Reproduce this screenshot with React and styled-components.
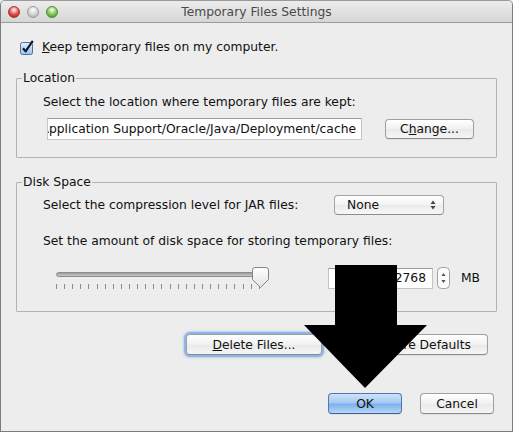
import React from 'react'
import styled, {createGlobalStyle} from 'styled-components'

const Global = createGlobalStyle`
  html, body {
    margin: 0;
    padding: 0;
    background: #ededed;
  }
  body {
    font-family: "DejaVu Sans", "Liberation Sans", sans-serif;
    font-size: 12.3px;
    color: #111;
  }
`

const Window = styled.div`
  position: relative;
  width: 513px;
  height: 432px;
  box-sizing: border-box;
  border: 1px solid #7c7c7c;
  border-top-color: #9a9a9a;
  border-radius: 5px 5px 0 0;
  background: #ededed;
  display: flex;
  flex-direction: column;
  overflow: hidden;
`

const TitleBar = styled.div`
  position: relative;
  height: 21px;
  flex: none;
  display: flex;
  align-items: center;
  justify-content: center;
  background: linear-gradient(#ececec, #d6d6d6);
  border-bottom: 1px solid #9c9c9c;
  color: #4a4a4a;
`

const Lights = styled.div`
  position: absolute;
  left: 7px;
  top: 5px;
  display: flex;
  gap: 7px;
`

const Light = styled.span`
  width: 12px;
  height: 12px;
  border-radius: 50%;
  box-sizing: border-box;
  border: 1px solid ${p => p.$edge};
  background: radial-gradient(circle at 50% 30%, #fff 0, ${p => p.$color} 55%, ${p => p.$dark} 100%);
`

const CheckRow = styled.label`
  display: flex;
  align-items: center;
  height: 16px;
  margin: 16px 0 0 19px;
`

const CheckText = styled.span`
  margin-left: 8px;
`

const Group = styled.fieldset`
  margin: ${p => p.$top}px 15px 0 15px;
  padding: 0 0 ${p => p.$bottom}px 26px;
  border: 1px solid #b3b3b3;
  border-radius: 1px;
  min-width: 0;
`

const Legend = styled.legend`
  margin-left: -21px;
  padding: 0 1px;
  line-height: 14px;
  color: #111;
`

const Label = styled.div`
  line-height: 16px;
  margin-top: ${p => p.$top || 0}px;
  width: ${p => (p.$width ? p.$width + 'px' : 'auto')};
  flex: none;
`

const Row = styled.div`
  display: flex;
  align-items: center;
  margin-top: ${p => p.$top || 0}px;
  margin-left: ${p => p.$left || 0}px;
`

const PathField = styled.div`
  width: 315px;
  height: 22px;
  box-sizing: border-box;
  display: flex;
  justify-content: flex-end;
  align-items: center;
  overflow: hidden;
  white-space: nowrap;
  padding-right: 5px;
  background: #fff;
  border: 1px solid #c6c6c6;
  border-top-color: #9c9c9c;
`

const Button = styled.button`
  height: ${p => p.$h || 21}px;
  width: ${p => p.$w}px;
  margin-left: ${p => p.$gap || 0}px;
  box-sizing: border-box;
  padding: 0;
  font: inherit;
  color: #111;
  border-radius: 4px;
  border: 1px solid ${p => (p.$primary ? '#5476ae' : '#9f9f9f')};
  border-bottom-color: ${p => (p.$primary ? '#3e5f98' : '#8a8a8a')};
  background: ${p =>
    p.$primary
      ? 'linear-gradient(#cfe3fa 0%, #a5c9f1 45%, #7fb2ec 55%, #b5d6fa 100%)'
      : 'linear-gradient(#ffffff, #f1f1f1 50%, #e9e9e9 51%, #f6f6f6)'};
  box-shadow: ${p => (p.$focus ? '0 0 0 2px #8fb5e6, 0 0 2px 3px #bcd3f0' : '0 1px 1px rgba(0,0,0,0.06)')};
`

const Select = styled.div`
  width: 110px;
  height: 20px;
  box-sizing: border-box;
  display: flex;
  align-items: center;
  justify-content: space-between;
  padding: 0 7px 0 12px;
  border: 1px solid #a2a2a2;
  border-bottom-color: #8c8c8c;
  border-radius: 4px;
  background: linear-gradient(#ffffff, #f3f3f3 50%, #ebebeb 51%, #f7f7f7);
`

const Slider = styled.div`
  position: relative;
  width: 213px;
  height: 24px;
  margin-left: 13px;
  flex: none;
`

const Track = styled.div`
  position: absolute;
  left: 0;
  top: 6px;
  width: 206px;
  height: 5px;
  box-sizing: border-box;
  border-radius: 3px;
  border: 1px solid #8d8d8d;
  background: linear-gradient(#9b9b9b, #c9c9c9);
`

const Ticks = styled.div`
  position: absolute;
  left: 0;
  top: 18px;
  display: flex;
  gap: 7.12px;
`

const Tick = styled.span`
  width: 1px;
  height: 5px;
  background: #8a8a8a;
`

const Thumb = styled.svg`
  position: absolute;
  left: 196px;
  top: 1px;
`

const NumberField = styled.div`
  width: 105px;
  height: 21px;
  margin-left: 59px;
  box-sizing: border-box;
  display: flex;
  align-items: center;
  justify-content: flex-end;
  padding-right: 6px;
  background: #fff;
  border: 1px solid #c3c3c3;
  border-top-color: #9c9c9c;
`

const Stepper = styled.svg`
  margin-left: 4px;
  flex: none;
`

const Unit = styled.span`
  margin-left: 11px;
`

const ButtonRow = styled.div`
  display: flex;
  justify-content: flex-end;
  margin: ${p => p.$top}px ${p => p.$right}px 0 0;
`

const Overlay = styled.svg`
  position: absolute;
  left: -1px;
  top: -1px;
  pointer-events: none;
`

const Check = () => (
  <svg width="14" height="15" viewBox="0 0 14 15">
    <defs>
      <linearGradient id="cb" x1="0" y1="0" x2="0" y2="1">
        <stop offset="0" stopColor="#e3eefb" />
        <stop offset="1" stopColor="#9cc1ea" />
      </linearGradient>
    </defs>
    <rect x="0.5" y="2.5" width="12" height="12" rx="2" fill="url(#cb)" stroke="#4f6f9e" />
    <path d="M3 8.2 L5.6 11.4 L12.8 0.8" fill="none" stroke="#0c1a33" strokeWidth="2.2" strokeLinejoin="round" />
  </svg>
)

const ticks = Array.from({length: 26})

export default function App() {
  return (
    <>
      <Global />
      <Window>
        <TitleBar>
          <Lights>
            <Light $color="#e2453f" $dark="#9b1b16" $edge="#a73a35" />
            <Light $color="#d2d2d2" $dark="#a3a3a3" $edge="#9a9a9a" />
            <Light $color="#7cc34a" $dark="#3f8a1c" $edge="#4f8a33" />
          </Lights>
          Temporary Files Settings
        </TitleBar>

        <CheckRow>
          <Check />
          <CheckText><u>K</u>eep temporary files on my computer.</CheckText>
        </CheckRow>

        <Group $top={16} $bottom={17}>
          <Legend>Location</Legend>
          <Label $top={9}>Select the location where temporary files are kept:</Label>
          <Row $top={8} $left={4}>
            <PathField>/Users/user/Library/Application Support/Oracle/Java/Deployment/cache</PathField>
            <Button $w={89} $h={20} $gap={23}>C<u>h</u>ange...</Button>
          </Row>
        </Group>

        <Group $top={17} $bottom={21}>
          <Legend>Disk Space</Legend>
          <Row $top={6}>
            <Label $width={291}>Select the compression level for JAR files:</Label>
            <Select>
              <span>None</span>
              <svg width="6" height="10" viewBox="0 0 6 10">
                <path d="M3 0.5 L5.5 4 H0.5 Z M3 9.5 L5.5 6 H0.5 Z" fill="#444" />
              </svg>
            </Select>
          </Row>
          <Label $top={18}>Set the amount of disk space for storing temporary files:</Label>
          <Row $top={17}>
            <Slider>
              <Track />
              <Ticks>
                {ticks.map((_, i) => <Tick key={i} />)}
              </Ticks>
              <Thumb width="18" height="22" viewBox="0 0 18 22">
                <defs>
                  <linearGradient id="th" x1="0" y1="0" x2="0" y2="1">
                    <stop offset="0" stopColor="#ffffff" />
                    <stop offset="1" stopColor="#e2e2e2" />
                  </linearGradient>
                </defs>
                <path d="M3 0.5 H14 Q16.5 0.5 16.5 3 V12.5 L8.5 20.5 L0.5 12.5 V3 Q0.5 0.5 3 0.5 Z" fill="url(#th)" stroke="#868686" />
              </Thumb>
            </Slider>
            <NumberField>32768</NumberField>
            <Stepper width="13" height="22" viewBox="0 0 13 22">
              <rect x="0.5" y="0.5" width="12" height="21" rx="4" fill="#fbfbfb" stroke="#a0a0a0" />
              <path d="M6.5 6 L8.6 9 H4.4 Z M6.5 16 L8.6 13 H4.4 Z" fill="#555" />
            </Stepper>
            <Unit>MB</Unit>
          </Row>
        </Group>

        <ButtonRow $top={22} $right={24}>
          <Button $w={136} $focus><u>D</u>elete Files...</Button>
          <Button $w={136} $gap={30}>Restore Defaults</Button>
        </ButtonRow>

        <ButtonRow $top={38} $right={18}>
          <Button $w={74} $primary>OK</Button>
          <Button $w={74} $gap={18}>Cancel</Button>
        </ButtonRow>

        <Overlay width="513" height="432" viewBox="0 0 513 432">
          <polygon points="335,265 397,265 397,325 427,325 365,388 304,325 335,325" fill="#000" />
        </Overlay>
      </Window>
    </>
  )
}
